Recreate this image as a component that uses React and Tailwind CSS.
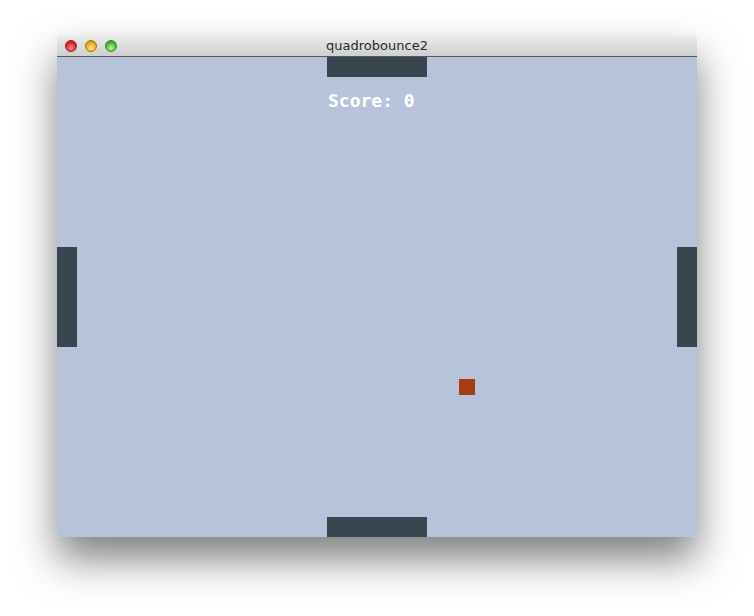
export default function App() {
  return (
    <div className="w-[754px] h-[616px] bg-white pl-[57px] pt-[35px]">
      <div className="w-[640px] rounded-[4px] shadow-[0_22px_40px_rgba(0,0,0,0.5)] overflow-hidden">
        {/* Title bar */}
        <div className="relative h-[22px] flex items-center justify-center bg-gradient-to-b from-[#ececec] to-[#cfcfcf] border-b border-[#585858]">
          <div className="absolute left-[8px] top-[5px] flex gap-[8px]">
            <span className="w-[12px] h-[12px] rounded-full bg-[radial-gradient(circle_at_50%_70%,#ff8a8a,#e0202a_60%,#9a1018)] border border-[#a01a20]" />
            <span className="w-[12px] h-[12px] rounded-full bg-[radial-gradient(circle_at_50%_70%,#ffe08a,#f0a81a_60%,#a06a10)] border border-[#a87010]" />
            <span className="w-[12px] h-[12px] rounded-full bg-[radial-gradient(circle_at_50%_70%,#b8f59a,#4cb82a_60%,#2a7a18)] border border-[#3a8a20]" />
          </div>
          <span className="text-[13px] leading-none text-[#2a2a2a] font-['DejaVu_Sans',sans-serif]">
            quadrobounce2
          </span>
        </div>

        {/* Game area */}
        <div className="relative h-[480px] bg-[#b7c3da] grid grid-rows-[1fr_100px_1fr]">
          <div className="flex flex-col items-center">
            <div className="w-[100px] h-[20px] bg-[#36474f]" />
            <div className="self-start mt-[15px] pl-[271px] text-white font-bold text-[18px] leading-none font-['DejaVu_Sans_Mono',monospace]">
              Score: 0
            </div>
          </div>
          <div className="flex justify-between">
            <div className="w-[20px] h-full bg-[#36474f]" />
            <div className="w-[20px] h-full bg-[#36474f]" />
          </div>
          <div className="flex items-end justify-center">
            <div className="w-[100px] h-[20px] bg-[#36474f]" />
          </div>
          {/* ball: free position on the playfield */}
          <div className="absolute left-[402px] top-[322px] w-[16px] h-[16px] bg-[#a33d14]" />
        </div>
      </div>
    </div>
  );
}
